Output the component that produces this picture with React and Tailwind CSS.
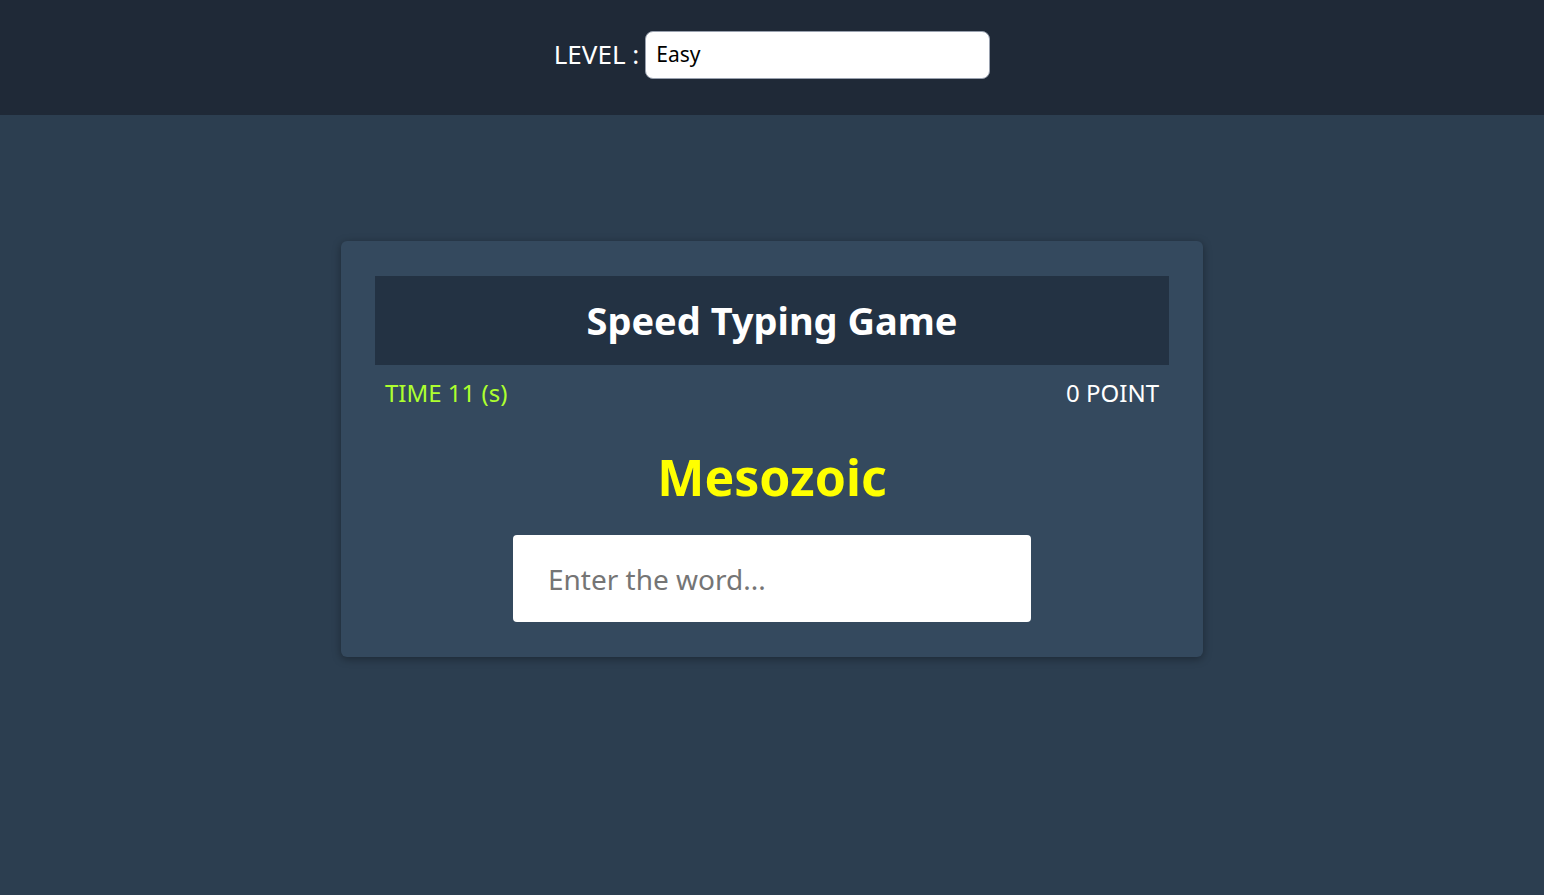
export default function App() {
  return (
    <div
      className="min-h-screen bg-[#2c3e50] text-white"
      style={{ fontFamily: '"Noto Sans", "Open Sans", sans-serif' }}
    >
      {/* HEADER */}
      <header className="h-[115px] bg-[#1f2937] flex items-center justify-center gap-[6px] pb-[6px]">
        <label className="text-[26px] text-white">LEVEL :</label>
        <select className="w-[345px] h-[48px] rounded-[8px] border border-gray-400 bg-white text-black text-[21px] px-[10px] appearance-none">
          <option>Easy</option>
          <option>Medium</option>
          <option>Hard</option>
        </select>
      </header>

      {/* GAME CARD */}
      <div className="flex justify-center pt-[126px]">
        <div className="w-[862px] bg-[#34495e] rounded-[6px] shadow-[0_2px_8px_rgba(0,0,0,0.35)] p-[34px] pt-[35px] pb-[35px]">
          <div className="h-[89px] bg-[#233243] flex items-center justify-center">
            <h1 className="text-[38px] font-bold text-white">Speed Typing Game</h1>
          </div>

          <div className="flex justify-between px-[10px] mt-[10px] text-[24px]">
            <span className="text-[#adff2f]">TIME 11 (s)</span>
            <span className="text-white">0 POINT</span>
          </div>

          <h2 className="text-center text-[50px] font-bold text-[#ffff00] mt-[29px]">
            Mesozoic
          </h2>

          <div className="flex justify-center mt-[20px]">
            <input
              type="text"
              placeholder="Enter the word..."
              className="w-[518px] h-[87px] rounded-[4px] bg-white text-black text-[28px] px-[35px] outline-none placeholder:text-[#757575]"
            />
          </div>
        </div>
      </div>
    </div>
  );
}
